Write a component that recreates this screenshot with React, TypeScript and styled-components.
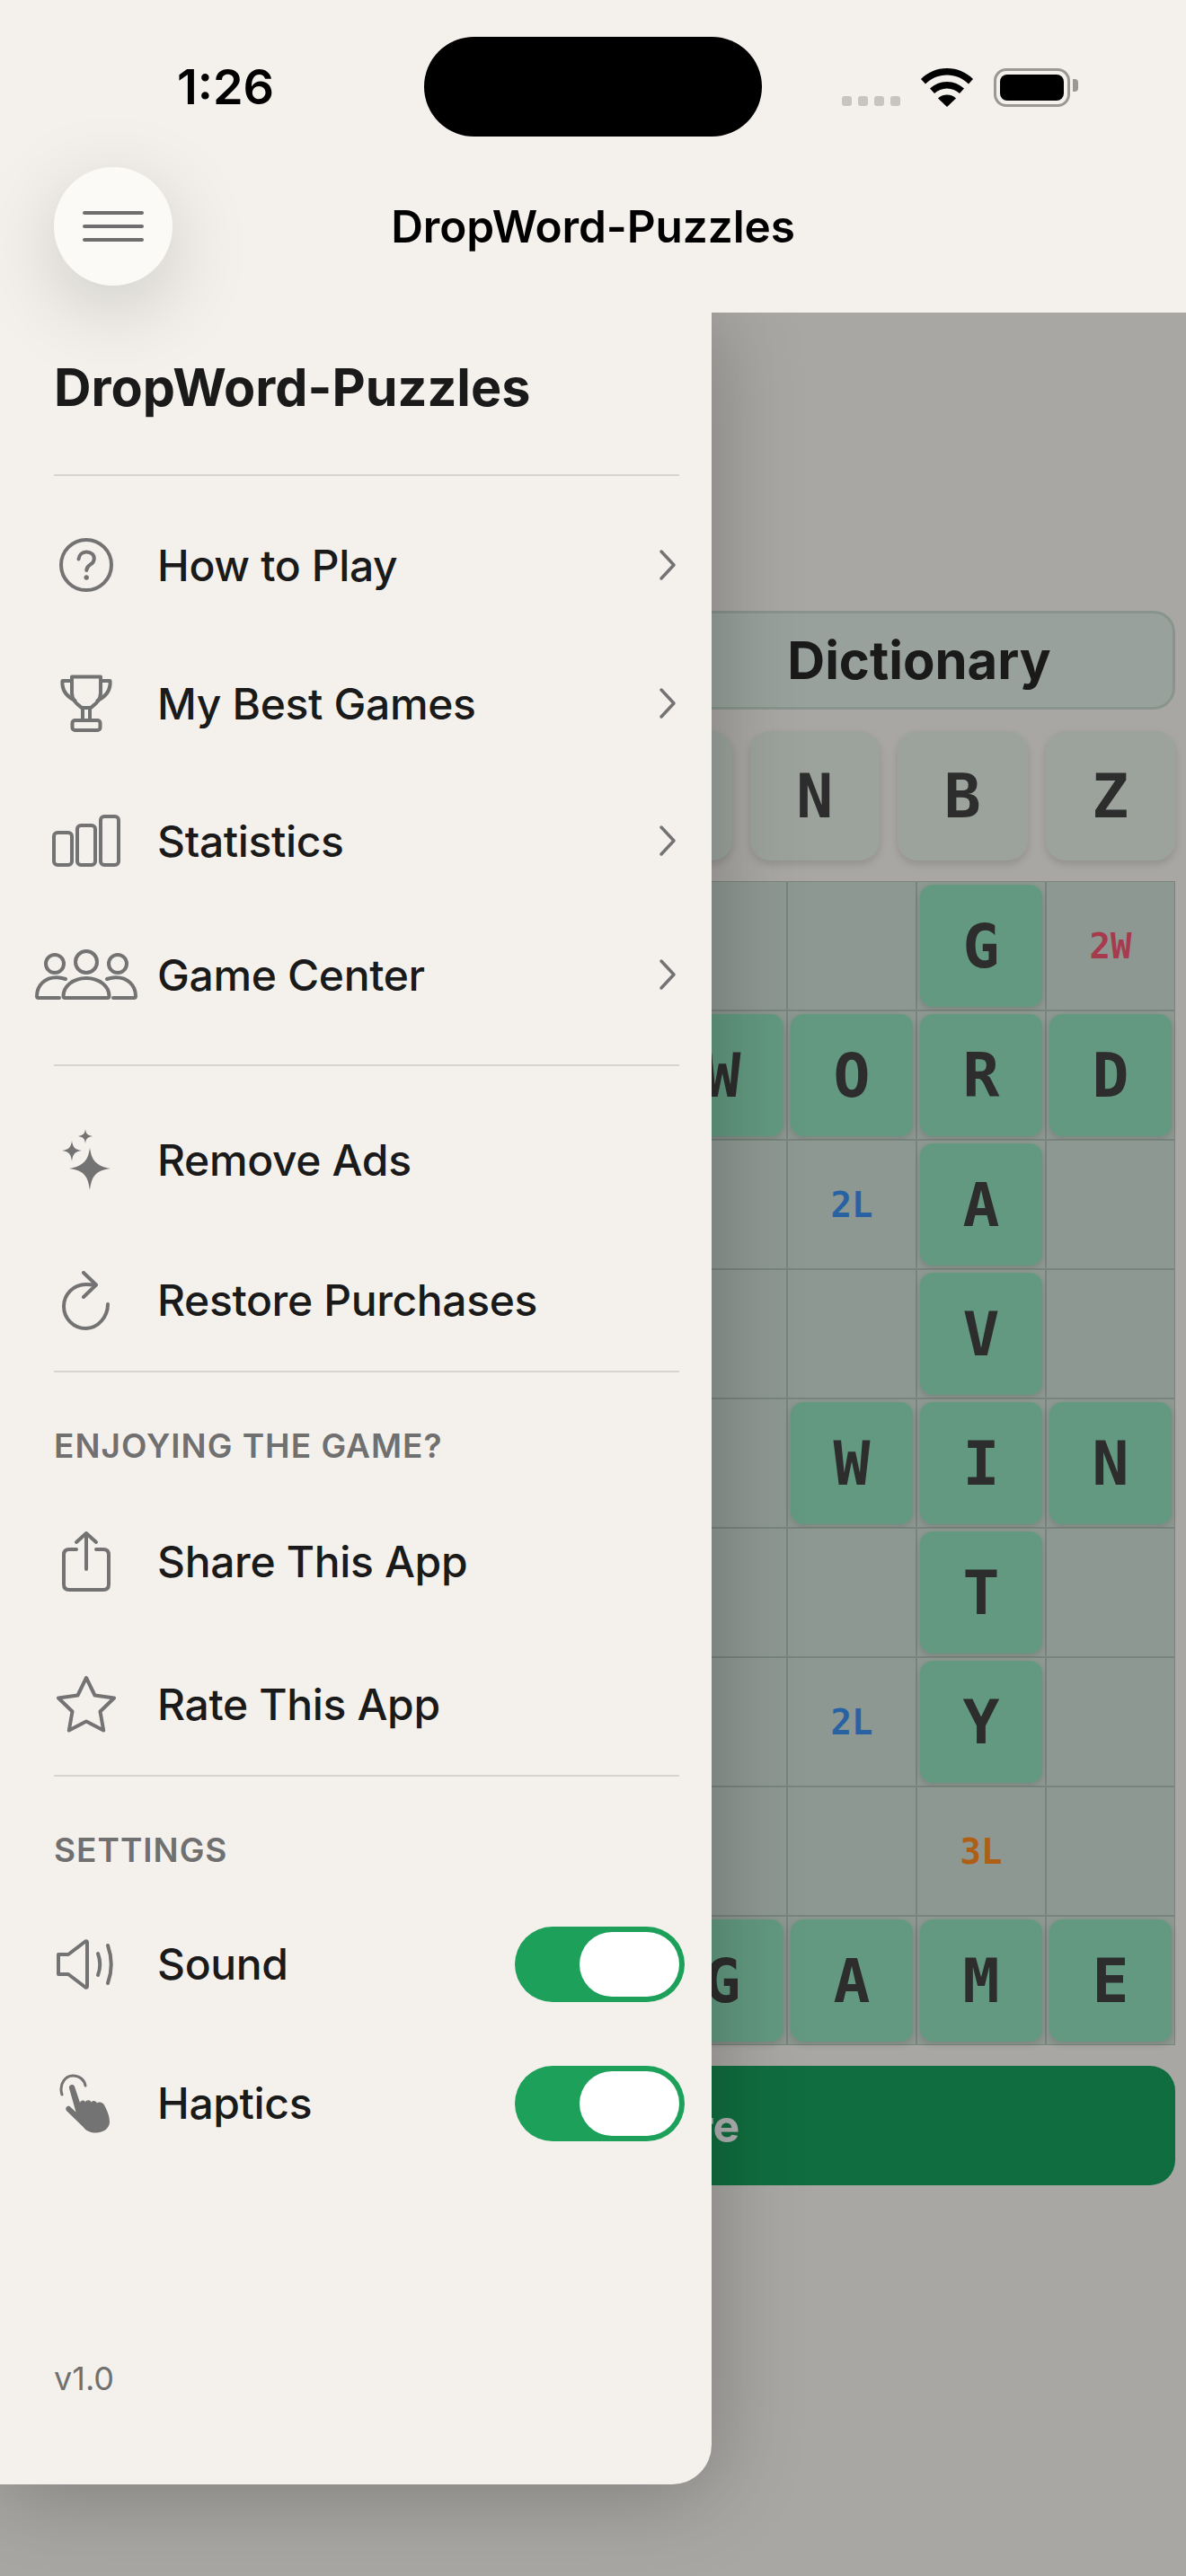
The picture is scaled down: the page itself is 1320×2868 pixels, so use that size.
import { ReactNode } from 'react'
import styled, { createGlobalStyle } from 'styled-components'

const GlobalStyle = createGlobalStyle`
  html, body {
    margin: 0;
    padding: 0;
    background: #f4f1ec;
  }
  * {
    box-sizing: border-box;
  }
`

const ICON = '#737373'

const QuestionIcon = () => (
  <svg width="64" height="64" viewBox="0 0 64 64" fill="none" stroke={ICON} strokeWidth="4" strokeLinecap="round">
    <circle cx="32" cy="32" r="28" />
    <path d="M23.5 25.5c.6-5 4-8 8.7-8 5 0 8.6 3.100 8.600 7.400 0 3.300-1.700 5-4.400 6.800-2.700 1.800-4 3.200-4.100 6.300" />
    <circle cx="32.200" cy="46" r="2.700" fill={ICON} stroke="none" />
  </svg>
)

const TrophyIcon = () => (
  <svg width="60" height="66" viewBox="0 0 60 66" fill="none" stroke={ICON} strokeWidth="4" strokeLinejoin="round" strokeLinecap="round">
    <path d="M14 3.500h32v18c0 9-7 13-11 16.500h-10c-4-3.500-11-7.500-11-16.500z" />
    <path d="M14 8H3.500c-.8 9 3.500 17 14 22" />
    <path d="M46 8h10.500c.8 9-3.500 17-14 22" />
    <path d="M26 38v13M34 38v13" />
    <rect x="14.500" y="52" width="31" height="11" rx="3" />
  </svg>
)

const ChartIcon = () => (
  <svg width="76" height="58" viewBox="0 0 76 58" fill="none" stroke={ICON} strokeWidth="4">
    <rect x="2" y="20" width="20" height="36" rx="4" />
    <rect x="28" y="12" width="20" height="44" rx="4" />
    <rect x="54" y="2" width="20" height="54" rx="4" />
  </svg>
)

const PeopleIcon = () => (
  <svg width="114" height="56" viewBox="0 0 114 56" fill="none" stroke={ICON} strokeWidth="4" strokeLinecap="round">
    <circle cx="22" cy="16" r="10" />
    <circle cx="57" cy="14" r="12" />
    <circle cx="92" cy="16" r="10" />
    <path d="M34 33c-3-1-6-1.800-10-1.800C11 31.200 2 40 2 52c0 1.500.8 2 2 2h23" />
    <path d="M80 33c3-1 6-1.800 10-1.800 13 0 22 8.800 22 20.800 0 1.500-.8 2-2 2H87" />
    <path d="M57 32c-15 0-25.500 9.500-25.500 20 0 1.500.8 2 2 2h47c1.200 0 2-.5 2-2 0-10.500-10.500-20-25.500-20z" />
  </svg>
)

const SparkleIcon = () => (
  <svg width="58" height="70" viewBox="2 0 58 70" fill={ICON}>
    <path d="M35 22c2 13 6 20 23 23-17 2-21 9-23 24-2-15-6-22-23-24 17-3 21-10 23-23z" />
    <path d="M15 14c1 7 3 10 11 11-8 1-10 4-11 12-1-8-3-11-11-12 8-1 10-4 11-11z" />
    <path d="M30 1c.7 5 2 7 8 8-6 1-7.300 3-8 8-.7-5-2-7-8-8 6-1 7.300-3 8-8z" />
  </svg>
)

const RestoreIcon = () => (
  <svg width="56" height="66" viewBox="0 0 56 66" fill="none" stroke={ICON} strokeWidth="4" strokeLinecap="round" strokeLinejoin="round">
    <path d="M52 37c0 14-11 27-24.500 27C14 64 3 53 3 39.500S14 15 27.500 15c3 0 8 .500 10 1" />
    <path d="M25 2l14 13.500L25 29" />
  </svg>
)

const ShareIcon = () => (
  <svg width="56" height="70" viewBox="0 0 56 70" fill="none" stroke={ICON} strokeWidth="4" strokeLinecap="round" strokeLinejoin="round">
    <path d="M17 21H9c-4 0-6 2-6 6v33c0 4 2 6 6 6h38c4 0 6-2 6-6V27c0-4-2-6-6-6h-8" />
    <path d="M28 43V3M17 13L28 3l11 10" />
  </svg>
)

const StarIcon = () => (
  <svg width="68" height="64" viewBox="0 0 68 64" fill="none" stroke={ICON} strokeWidth="4" strokeLinejoin="round">
    <path d="M34 3l9.500 19.500 21.500 3-15.500 15 3.700 21L34 51.500 14.800 61.500l3.700-21L3 25.500l21.500-3z" />
  </svg>
)

const SpeakerIcon = () => (
  <svg width="68" height="56" viewBox="0 0 68 56" fill="none" stroke={ICON} strokeWidth="4" strokeLinecap="round" strokeLinejoin="round">
    <path d="M3 17h11L33 2.500c1-.7 2-.2 2 1v49c0 1.200-1 1.700-2 1L14 39H3z" />
    <path d="M47 16c3 8 3 16 0 24" />
    <path d="M58 7c5 14 5 28 0 42" />
  </svg>
)

const HandIcon = () => (
  <svg width="60" height="66" viewBox="0 0 60 66" fill="none">
    <path d="M3 23C-1 10 8 2 15 2c8 0 13 5 14 11" stroke={ICON} strokeWidth="3" strokeLinecap="round" />
    <path
      d="M11 16c-.800-4 4.500-5.500 6-2l6 18c.5-3 5-3.500 6-.500.8-2.800 5.500-3 6.500 0 1.500-2.500 5.500-2 6.500 1 1-1.500 6-2 8 2 3 6 6 12 6 19 0 7-7 12-15 12-6 0-11-2-14-6L8 41c-2-3 .5-6 3.500-5l7 6.500z"
      fill={ICON}
    />
  </svg>
)

const Chevron = () => (
  <svg width="20" height="36" viewBox="0 0 20 36" fill="none" stroke={ICON} strokeWidth="3.500" strokeLinecap="round" strokeLinejoin="round">
    <path d="M3 3l14 15L3 33" />
  </svg>
)

const WifiIcon = () => (
  <svg width="58" height="43" viewBox="0 0 58 43" fill="#000">
    <path d="M29 0c11.500 0 21.500 4.500 29 12l-5 5.500C46.500 11 38 7.500 29 7.500S11.500 11 5 17.500L0 12C7.500 4.500 17.500 0 29 0z" />
    <path d="M29 15c7.500 0 14 3 19 7.500l-5 5.500c-3.700-3.300-8.700-5.500-14-5.500S18.700 24.700 15 28l-5-5.500C15 18 21.500 15 29 15z" />
    <path d="M29 29.500c4 0 7.500 1.500 10 4L29 43 19 33.500c2.500-2.500 6-4 10-4z" />
  </svg>
)

type Item = { icon: ReactNode; label: string; height: number; chevron?: boolean }

const mainItems: Item[] = [
  { icon: <QuestionIcon />, label: 'How to Play', height: 154, chevron: true },
  { icon: <TrophyIcon />, label: 'My Best Games', height: 154, chevron: true },
  { icon: <ChartIcon />, label: 'Statistics', height: 152, chevron: true },
  { icon: <PeopleIcon />, label: 'Game Center', height: 146, chevron: true },
]

const storeItems: Item[] = [
  { icon: <SparkleIcon />, label: 'Remove Ads', height: 156 },
  { icon: <RestoreIcon />, label: 'Restore Purchases', height: 157 },
]

const shareItems: Item[] = [
  { icon: <ShareIcon />, label: 'Share This App', height: 159 },
  { icon: <StarIcon />, label: 'Rate This App', height: 158 },
]

const rack = ['', '', '', '', '', 'N', 'B', 'Z']

// 9x9 board, only the columns that show beside the drawer are filled in
const board: Record<string, string> = {
  '0-7': 'G',
  '0-8': '2W',
  '1-5': 'W',
  '1-6': 'O',
  '1-7': 'R',
  '1-8': 'D',
  '2-6': '2L',
  '2-7': 'A',
  '3-7': 'V',
  '4-6': 'W',
  '4-7': 'I',
  '4-8': 'N',
  '5-7': 'T',
  '6-6': '2L',
  '6-7': 'Y',
  '7-7': '3L',
  '8-5': 'G',
  '8-6': 'A',
  '8-7': 'M',
  '8-8': 'E',
}

const premiumColors: Record<string, string> = {
  '2W': '#ee5570',
  '2L': '#3c8eeb',
  '3L': '#fb8921',
}

const MenuRow = ({ item }: { item: Item }) => (
  <Row $height={item.height}>
    <IconSlot>{item.icon}</IconSlot>
    <RowLabel>{item.label}</RowLabel>
    {item.chevron && (
      <ChevronSlot>
        <Chevron />
      </ChevronSlot>
    )}
  </Row>
)

const App = () => {
  const cells = []
  for (let r = 0; r < 9; r++) {
    for (let c = 0; c < 9; c++) {
      const value = board[`${r}-${c}`]
      cells.push(
        <Cell key={`${r}-${c}`}>
          {value && premiumColors[value] && <Premium $color={premiumColors[value]}>{value}</Premium>}
          {value && !premiumColors[value] && <BoardTile>{value}</BoardTile>}
        </Cell>,
      )
    }
  }

  return (
    <Page>
      <GlobalStyle />
      <Header>
        <StatusBar>
          <Time>1:26</Time>
          <Island />
          <StatusIcons>
            <Signal>
              <SignalDot />
              <SignalDot />
              <SignalDot />
              <SignalDot />
            </Signal>
            <WifiIcon />
            <Battery>
              <BatteryFill />
            </Battery>
          </StatusIcons>
        </StatusBar>
        <TitleBar>
          <MenuButton>
            <MenuBar />
            <MenuBar />
            <MenuBar />
          </MenuButton>
          <Title>DropWord-Puzzles</Title>
        </TitleBar>
      </Header>

      <Main>
        <Actions>
          <ActionButton />
          <DictionaryButton>Dictionary</DictionaryButton>
        </Actions>
        <Rack>
          {rack.map((letter, index) => (
            <RackTile key={index}>{letter}</RackTile>
          ))}
        </Rack>
        <Board>{cells}</Board>
        <SubmitButton>Submit Score</SubmitButton>
        <Scrim />
        <Drawer>
          <DrawerTitle>DropWord-Puzzles</DrawerTitle>
          <Divider />
          <MainList>
            {mainItems.map((item) => (
              <MenuRow key={item.label} item={item} />
            ))}
          </MainList>
          <Divider />
          <StoreList>
            {storeItems.map((item) => (
              <MenuRow key={item.label} item={item} />
            ))}
          </StoreList>
          <Divider />
          <SectionLabel>ENJOYING THE GAME?</SectionLabel>
          {shareItems.map((item) => (
            <MenuRow key={item.label} item={item} />
          ))}
          <Divider />
          <SectionLabel>SETTINGS</SectionLabel>
          <Row $height={155}>
            <IconSlot>
              <SpeakerIcon />
            </IconSlot>
            <RowLabel>Sound</RowLabel>
            <Toggle>
              <Thumb />
            </Toggle>
          </Row>
          <Row $height={155}>
            <IconSlot>
              <HandIcon />
            </IconSlot>
            <RowLabel>Haptics</RowLabel>
            <Toggle>
              <Thumb />
            </Toggle>
          </Row>
          <Version>v1.0</Version>
        </Drawer>
      </Main>
    </Page>
  )
}

const Page = styled.div`
  width: 1320px;
  height: 2868px;
  background: #f4f1ec;
  overflow: hidden;
  font-family: Inter, 'Liberation Sans', sans-serif;
  color: #1a1a1a;
`
const Header = styled.header`
  position: relative;
  z-index: 3;
  height: 348px;
  background: #f4f1ec;
`
const StatusBar = styled.div`
  display: grid;
  grid-template-columns: 472px 376px 1fr;
  height: 186px;
  padding-top: 41px;
`
const Time = styled.div`
  height: 111px;
  line-height: 111px;
  text-align: center;
  padding-left: 30px;
  font-size: 54px;
  font-weight: 600;
  color: #000;
`
const Island = styled.div`
  height: 111px;
  border-radius: 56px;
  background: #000;
`
const StatusIcons = styled.div`
  display: flex;
  align-items: flex-end;
  height: 78px;
  padding-left: 89px;
  gap: 23px;
`
const Signal = styled.div`
  display: flex;
  gap: 7px;
  margin-bottom: 1px;
`
const SignalDot = styled.span`
  width: 11px;
  height: 11px;
  border-radius: 3px;
  background: #c6c5c1;
`
const Battery = styled.div`
  position: relative;
  width: 85px;
  height: 43px;
  padding: 4px;
  border: 3px solid #9a9894;
  border-radius: 14px;

  &::after {
    content: '';
    position: absolute;
    top: 9px;
    right: -12px;
    width: 6px;
    height: 14px;
    border-radius: 0 4px 4px 0;
    background: #9a9894;
  }
`
const BatteryFill = styled.div`
  width: 100%;
  height: 100%;
  border-radius: 8px;
  background: #000;
`
const TitleBar = styled.div`
  display: grid;
  grid-template-columns: 1fr auto 1fr;
  align-items: center;
  height: 132px;
  padding: 0 60px;
`
const MenuButton = styled.div`
  display: flex;
  flex-direction: column;
  align-items: center;
  justify-content: center;
  gap: 11px;
  width: 132px;
  height: 132px;
  border-radius: 50%;
  background: #fbfaf6;
  box-shadow: 0 24px 90px rgba(0, 0, 0, 0.17);
`
const MenuBar = styled.span`
  width: 68px;
  height: 4px;
  border-radius: 2px;
  background: #6e6e6e;
`
const Title = styled.div`
  font-size: 49.5px;
  font-weight: 600;
  letter-spacing: -0.1px;
  color: #000;
`
const Main = styled.main`
  position: relative;
  height: 2520px;
  padding: 332px 12px 0;
`
const Actions = styled.div`
  display: flex;
  gap: 12px;
  height: 110px;
`
const ActionButton = styled.div`
  flex: 1;
  border: 3px solid #c4d6cc;
  border-radius: 24px;
  background: #dbe8e0;
`
const DictionaryButton = styled(ActionButton)`
  flex: 0 0 570px;
  display: flex;
  align-items: center;
  justify-content: center;
  font-size: 58px;
  font-weight: 700;
  color: #262626;
`
const Rack = styled.div`
  display: grid;
  grid-template-columns: repeat(8, 1fr);
  gap: 20px;
  height: 144px;
  margin-top: 24px;
`
const RackTile = styled.div`
  display: flex;
  align-items: center;
  justify-content: center;
  border-radius: 22px;
  background: #e1ebe2;
  box-shadow: 0 4px 10px rgba(0, 0, 0, 0.14);
  font-family: 'DejaVu Sans Mono', 'Liberation Mono', monospace;
  font-size: 68px;
  font-weight: 700;
  color: #414141;
`
const Board = styled.div`
  display: grid;
  grid-template-columns: repeat(9, 144px);
  grid-template-rows: repeat(9, 144px);
  margin-top: 23px;
`
const Cell = styled.div`
  display: flex;
  align-items: center;
  justify-content: center;
  padding: 3px;
  border: 1.5px solid #aebfb5;
  background: #cddcd3;
`
const BoardTile = styled.div`
  display: flex;
  align-items: center;
  justify-content: center;
  width: 100%;
  height: 100%;
  border-radius: 14px;
  background: #8eddb9;
  box-shadow: 0 3px 8px rgba(0, 0, 0, 0.14);
  font-family: 'DejaVu Sans Mono', 'Liberation Mono', monospace;
  font-size: 68px;
  font-weight: 700;
  color: #414141;
`
const Premium = styled.span<{ $color: string }>`
  font-family: 'DejaVu Sans Mono', 'Liberation Mono', monospace;
  font-size: 39px;
  font-weight: 700;
  color: ${(props) => props.$color};
`
const SubmitButton = styled.div`
  display: flex;
  align-items: center;
  justify-content: center;
  height: 133px;
  margin-top: 23px;
  border-radius: 28px;
  background: #189e5b;
  font-size: 50px;
  font-weight: 700;
  color: #fff;
`
const Scrim = styled.div`
  position: absolute;
  inset: 0;
  background: rgba(0, 0, 0, 0.305);
`
const Drawer = styled.aside`
  position: absolute;
  top: 0;
  left: 0;
  display: flex;
  flex-direction: column;
  width: 792px;
  height: 2418px;
  padding: 0 36px 0 60px;
  border-radius: 0 0 44px 0;
  background: #f4f1ec;
  box-shadow: 0 8px 100px rgba(0, 0, 0, 0.26);
`
const DrawerTitle = styled.h1`
  display: flex;
  align-items: center;
  height: 180px;
  margin: 0;
  padding-bottom: 14px;
  font-size: 57.5px;
  font-weight: 700;
`
const Divider = styled.div`
  flex: none;
  height: 2px;
  background: #d6d4cf;
`
const MainList = styled.div`
  padding-top: 22px;
  padding-bottom: 27px;
`
const StoreList = styled.div`
  padding-top: 26px;
`
const Row = styled.div<{ $height: number }>`
  display: flex;
  flex: none;
  align-items: center;
  height: ${(props) => props.$height}px;
`
const IconSlot = styled.div`
  display: flex;
  flex: none;
  justify-content: center;
  width: 72px;
  margin-right: 43px;

  svg {
    flex: none;
  }
`
const RowLabel = styled.span`
  flex: 1;
  font-size: 48px;
  font-weight: 500;
  letter-spacing: -0.35px;
`
const ChevronSlot = styled.div`
  display: flex;
  margin-right: 3px;
`
const SectionLabel = styled.div`
  display: flex;
  flex: none;
  align-items: center;
  height: 46px;
  margin: 58px 0 27px;
  font-size: 37px;
  font-weight: 600;
  letter-spacing: 1px;
  color: #707070;
`
const Toggle = styled.div`
  display: flex;
  justify-content: flex-end;
  width: 189px;
  height: 84px;
  margin-right: -6px;
  padding: 6px;
  border-radius: 42px;
  background: #1ca05a;
`
const Thumb = styled.div`
  width: 111px;
  height: 72px;
  border-radius: 36px;
  background: #fff;
`
const Version = styled.div`
  margin-top: auto;
  margin-bottom: 96px;
  font-size: 36px;
  color: #707070;
`

export default App
